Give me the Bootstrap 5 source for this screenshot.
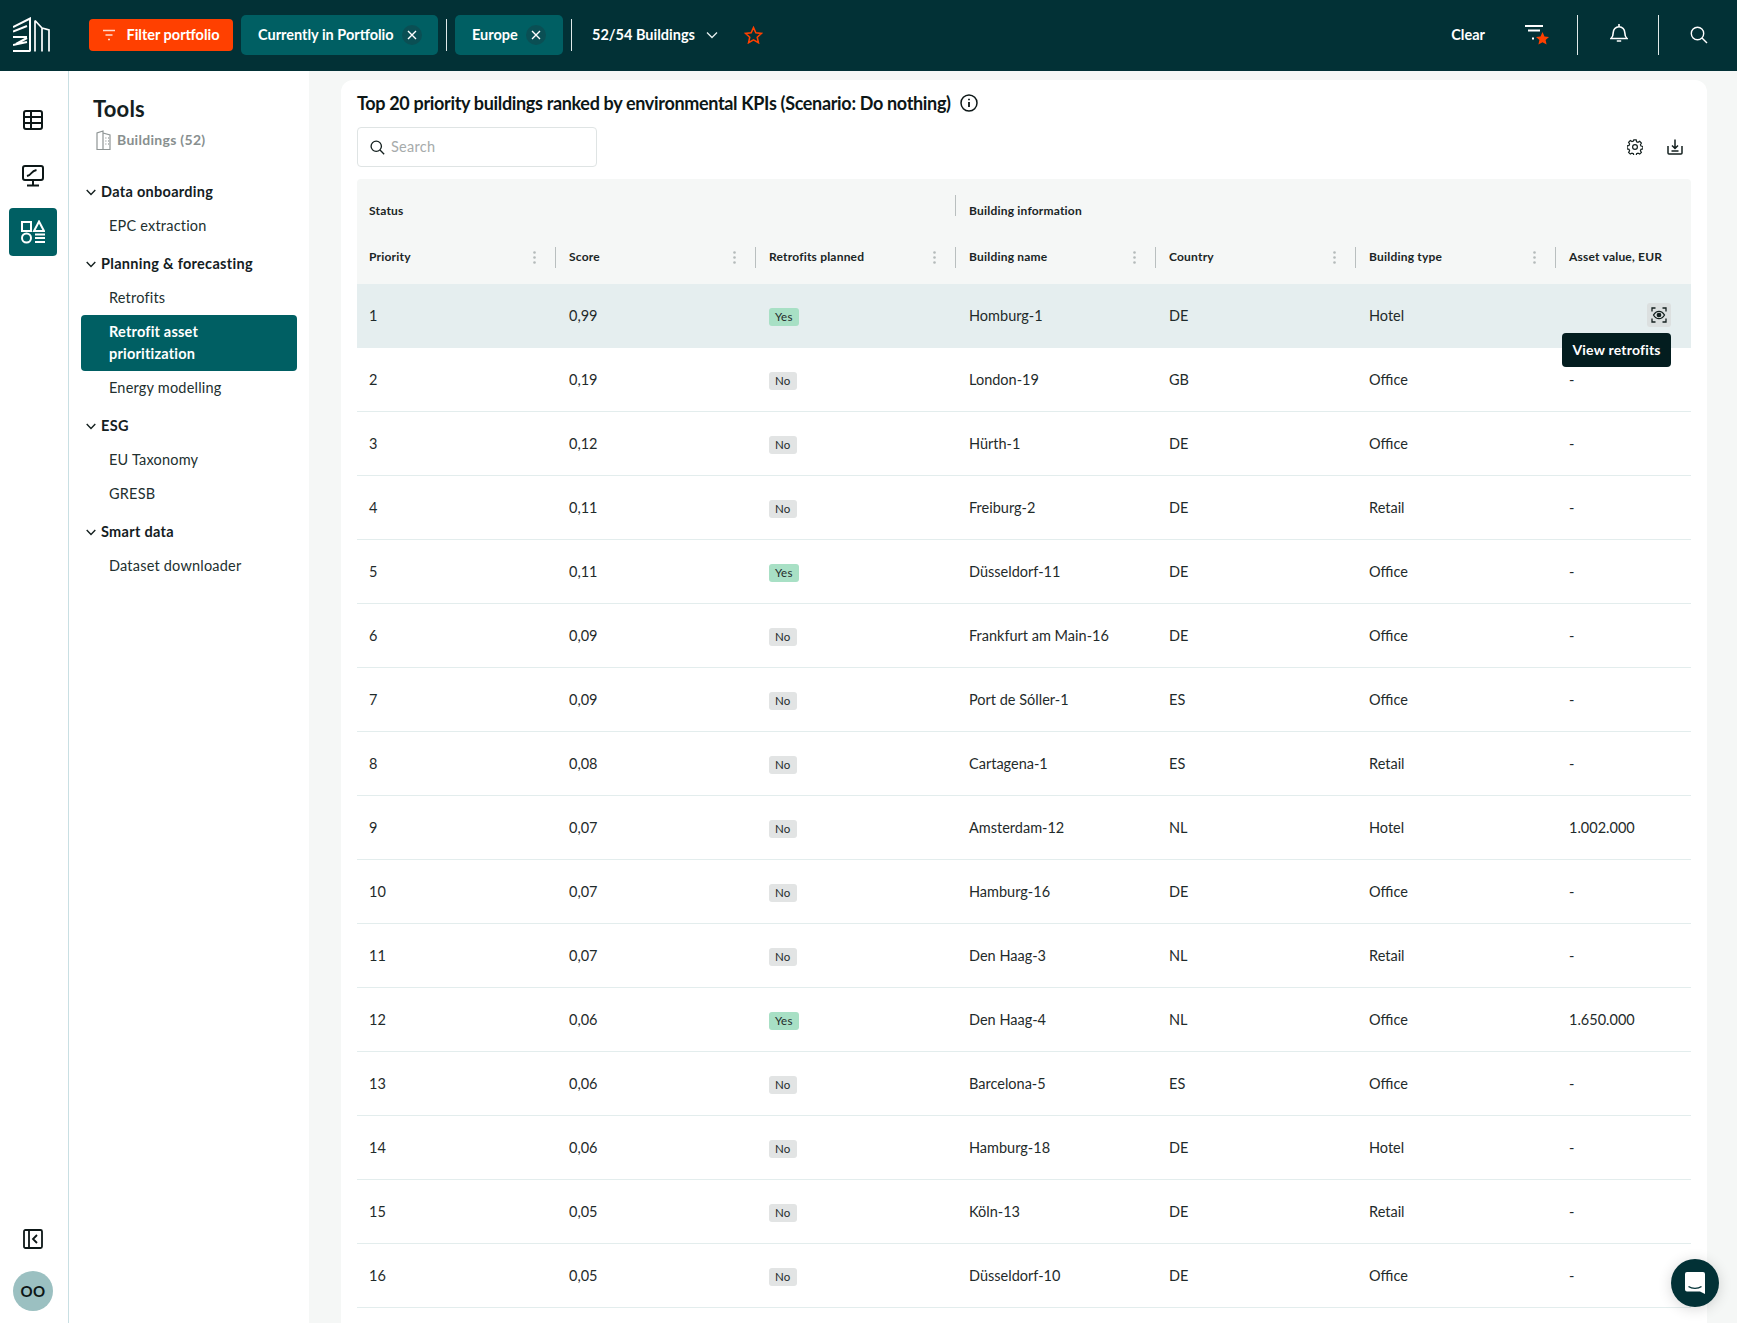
<!DOCTYPE html>
<html lang="en">
<head>
<meta charset="utf-8">
<title>Retrofit asset prioritization</title>
<link href="https://cdn.jsdelivr.net/npm/bootstrap@5.3.0/dist/css/bootstrap.min.css" rel="stylesheet">
<style>
html,body{height:100%;}
body{font-family:"Lato","Liberation Sans",sans-serif;background:#f5f7f6;color:#14201f;overflow:hidden;}
.topbar{height:71px;background:#023136;color:#fff;padding-left:13px;padding-right:29px;padding-bottom:1px;}
.logo-wrap{width:76px;}
.filter-btn{height:32px;width:144px;background:#ff4000;color:#fff;border:0;border-radius:4px;font-size:14.5px;font-weight:700;gap:10px;padding:0;white-space:nowrap;}
.chip{height:40px;background:#005f63;border-radius:5px;font-size:14.5px;font-weight:700;color:#fff;padding-left:17px;padding-right:17px;gap:8px;white-space:nowrap;}
.chip-first{width:197px;margin-left:8px;}
.chip-second{width:108px;}
.chip-x{width:20px;height:20px;border-radius:50%;background:#0a4f54;flex:none;}
.vline{width:1px;height:32px;background:#dfe9e9;}
.vline-tall{height:40px;}
.count-label{font-size:14.5px;font-weight:700;}
.count-chev{margin-left:11px;}
.count-star{margin-left:26px;}
.clear-label{font-size:14.5px;font-weight:700;}
.tfilter{margin-left:40px;margin-right:28px;}
.tbell{margin-left:32px;margin-right:30px;margin-bottom:4px;}
.tsearch{margin-left:31px;}
.shell{height:calc(100vh - 71px);}
.rail{width:69px;background:#fff;border-right:1px solid #c9dfe3;padding:25px 2px 12px 0;}
.rail-ico{width:48px;height:48px;border-radius:4px;color:#0d1717;}
.rail-ico-gap{margin-bottom:8px;}
.rail-active{background:#005f63;color:#fff;}
.avatar{width:40px;height:40px;border-radius:50%;background:#9bc0c1;color:#0d1717;font-size:15px;font-weight:700;letter-spacing:.5px;margin-top:22px;}
.tools{width:240px;background:#fff;padding:23px 12px 0 12px;}
.tools-title{font-size:22px;font-weight:700;line-height:30px;margin-left:12px;letter-spacing:.2px;}
.tools-sub{font-size:14px;font-weight:700;color:#888f8f;margin-left:15px;margin-top:6px;margin-bottom:25px;letter-spacing:.3px;gap:6px;line-height:20px;}
.sec-head{height:34px;font-size:14.5px;font-weight:700;letter-spacing:.3px;gap:5px;padding-left:5px;margin-top:4px;}
.nav-entry{height:34px;padding-left:28px;font-size:14.5px;letter-spacing:.2px;color:#22302f;text-decoration:none;display:flex;align-items:center;}
.nav-entry-on{height:56px;background:#005f63;color:#fff;font-weight:700;border-radius:4px;line-height:22px;}
.workspace{flex:1;min-width:0;padding:9px 30px 0 32px;overflow:hidden;}
.sheet{background:#fff;border-radius:12px;padding:13px 16px 60px 16px;}
.sheet-title{font-size:18px;font-weight:700;line-height:20px;letter-spacing:-.33px;margin:0;gap:9px;color:#0d1717;}
.tool-row{margin-top:14px;margin-bottom:12px;}
.find-box{width:240px;height:40px;border:1px solid #dfe4e4;border-radius:4px;padding-left:12px;gap:6px;color:#a6abab;font-size:14.5px;letter-spacing:.3px;}
.tool-gap{gap:24px;padding-right:8px;}
.prio-table{table-layout:fixed;width:1334px;margin:0;--bs-table-bg:transparent;border-collapse:separate;border-spacing:0;}
.prio-table th{background:#f5f7f6;font-size:12px;font-weight:700;letter-spacing:.2px;border:0;padding:0;color:#1a2525;}
.prio-table thead tr:first-child th{height:62px;padding-top:16px;vertical-align:top;}
.prio-table thead tr:first-child th:first-child{border-top-left-radius:4px;}
.prio-table thead tr:first-child th:last-child{border-top-right-radius:4px;}
.prio-table thead tr:last-child th{height:43px;padding-top:6px;vertical-align:top;}
.hcell{height:21px;padding-left:12px;padding-right:19px;}
.hcell-sep{border-left:1px solid #b9bfbf;padding-left:13px;}
.hcell-low{align-items:flex-end;line-height:10px;}
.hcell-lbl{padding-bottom:2px;}
.prio-table td{height:64px;padding:0 0 0 14px;vertical-align:middle;font-size:14.5px;color:#1f2b2b;border-bottom:1px solid #e3eded;}
.prio-table td:first-child{padding-left:12px;}
.row-on td{background:#e5eeef;border-bottom:0;}
.flag{display:inline-block;height:18px;line-height:18px;padding:0 6px;border-radius:3px;font-size:11.5px;letter-spacing:.2px;color:#1f2b2b;vertical-align:middle;}
.flag-no{background:#e2e4e4;}
.flag-yes{background:#a8e0c5;}
.eye-cell{position:relative;}
.eye-btn{width:24px;height:24px;background:#dce0e0;border-radius:3px;position:absolute;right:20px;top:19px;}
.tip{position:absolute;right:20px;top:49px;width:109px;height:34px;padding-bottom:2px;background:#031d1f;color:#fff;border-radius:4px;font-size:14px;font-weight:700;letter-spacing:.2px;z-index:3;}
.chat{position:fixed;right:18px;bottom:16px;width:48px;height:48px;border-radius:50%;background:#023136;box-shadow:0 2px 14px rgba(0,0,0,.16);}
</style>
</head>
<body>
<header class="topbar d-flex align-items-center">
  <div class="logo-wrap d-flex">
    <svg width="38" height="36" viewBox="0 0 38 36" fill="none" stroke="#fff" stroke-width="2"><path d="M0 10 L17 1.500 V34.500 M0 14.500 L14 9 M0 20 H14 M3 27 L14 21 M0 28 L14 25 M0 34 H17"/><path d="M22 3.500 V34.500 M22 3.500 L29 11 V34.500 M29 11 L36 13 V34.500" stroke-width="1.700"/></svg>
  </div>
  <button type="button" class="filter-btn btn d-flex align-items-center justify-content-center">
    <svg width="14" height="12" viewBox="0 0 14 12" fill="none" stroke="#ffd9cc" stroke-width="1.600"><path d="M1 1.500H13M3.500 6H10.500M6 10.500H8"/></svg>
    <span>Filter portfolio</span>
  </button>
  <div class="chip chip-first d-flex align-items-center justify-content-between">
    <span>Currently in Portfolio</span>
    <span class="chip-x d-flex align-items-center justify-content-center"><svg width="10" height="10" viewBox="0 0 10 10" stroke="#fff" stroke-width="1.400"><path d="M1 1L9 9M9 1L1 9"/></svg></span>
  </div>
  <div class="vline mx-2"></div>
  <div class="chip chip-second d-flex align-items-center justify-content-between">
    <span>Europe</span>
    <span class="chip-x d-flex align-items-center justify-content-center"><svg width="10" height="10" viewBox="0 0 10 10" stroke="#fff" stroke-width="1.400"><path d="M1 1L9 9M9 1L1 9"/></svg></span>
  </div>
  <div class="vline mx-2"></div>
  <div class="d-flex align-items-center ms-2 ps-1">
    <span class="count-label">52/54 Buildings</span>
    <svg class="count-chev" width="12" height="8" viewBox="0 0 12 8" fill="none" stroke="#e6eeee" stroke-width="1.300"><path d="M1 1.500L6 6.500L11 1.500"/></svg>
    <svg class="count-star" width="19" height="18" viewBox="0 0 24 23" fill="none" stroke="#ff4000" stroke-width="2"><path d="M12 2l3 6.600 7.200.8-5.400 4.900 1.500 7.100L12 17.800l-6.300 3.600 1.500-7.100L1.800 9.400 9 8.600z"/></svg>
  </div>
  <div class="ms-auto d-flex align-items-center">
    <span class="clear-label">Clear</span>
    <svg class="tfilter" width="24" height="20" viewBox="0 0 24 20" fill="none"><path d="M0 1H18M3 5.500H15M7 13.500H9" stroke="#fff" stroke-width="1.800"/><path d="M17.500 7l2 4.400 4.500.5-3.400 3.100 1 4.600-4.100-2.400-4.100 2.400 1-4.600-3.400-3.100 4.500-.5z" fill="#ff4000"/></svg>
    <div class="vline vline-tall"></div>
    <svg class="tbell" width="18" height="20" viewBox="0 0 18 20" fill="none" stroke="#fff" stroke-width="1.600"><path d="M1 15.500c1.600-1.400 2.200-3 2.200-5.800 0-3.300 2.400-6 5.800-6s5.800 2.700 5.800 6c0 2.800.6 4.400 2.200 5.800zM9 1v2.500M6.800 18h4.400"/></svg>
    <div class="vline vline-tall"></div>
    <svg class="tsearch" width="18" height="18" viewBox="0 0 18 18" fill="none" stroke="#fff" stroke-width="1.400"><circle cx="7.500" cy="7.500" r="6.200"/><path d="M12 12l5 5"/></svg>
  </div>
</header>
<div class="shell d-flex">
  <aside class="rail d-flex flex-column align-items-center">
    <div class="rail-ico d-flex align-items-center justify-content-center rail-ico-gap">
      <svg width="20" height="20" viewBox="0 0 20 20" fill="none" stroke="currentColor" stroke-width="2"><rect x="1" y="1" width="18" height="18" rx="2"/><path d="M1 7H19M1 13H19M8 1V19"/></svg>
    </div>
    <div class="rail-ico d-flex align-items-center justify-content-center rail-ico-gap">
      <svg width="22" height="22" viewBox="0 0 22 22" fill="none" stroke="currentColor" stroke-width="2"><path d="M3 1H19a2 2 0 0 1 2 2V13a2 2 0 0 1-2 2H3a2 2 0 0 1-2-2V3a2 2 0 0 1 2-2z"/><path d="M5 11c2-.5 3-1 4.500-3s2.500-2.500 5-3M11 15v5M5 20.500H17"/></svg>
    </div>
    <div class="rail-ico rail-active d-flex align-items-center justify-content-center">
      <svg width="24" height="24" viewBox="0 0 24 24" fill="none" stroke="currentColor" stroke-width="2"><rect x="1" y="2" width="9" height="9"/><path d="M18 1.500L23 11H13z"/><circle cx="5.500" cy="18" r="4.500"/><path d="M14 14.500H24M14 18H24M14 22H24"/></svg>
    </div>
    <div class="mt-auto d-flex flex-column align-items-center">
      <svg width="20" height="20" viewBox="0 0 20 20" fill="none" stroke="#0d1717" stroke-width="1.800"><rect x="1" y="1" width="18" height="18" rx="1.500"/><path d="M6 1V19M14 6L10 10L14 14"/></svg>
      <div class="avatar d-flex align-items-center justify-content-center">OO</div>
    </div>
  </aside>
  <nav class="tools">
    <div class="tools-title">Tools</div>
    <div class="tools-sub d-flex align-items-center">
      <svg width="15" height="20" viewBox="0 0 15 20" fill="none" stroke="#8f9595" stroke-width="1.200"><path d="M1 20V3l6 -2V20M7 3L14 5V20M1 19.500H14"/><path d="M9.500 8h.8M12 8h.8M9.500 11h.8M12 11h.8M9.500 14h.8M12 14h.8" stroke-width="1.400"/></svg>
      <span>Buildings (52)</span>
    </div>
    <div class="sec-head d-flex align-items-center"><svg width="10" height="7" viewBox="0 0 10 7" fill="none" stroke="#14201f" stroke-width="1.400"><path d="M.7 1L5 5.500L9.300 1"/></svg><span>Data onboarding</span></div>
    <a class="nav-entry" href="#">EPC extraction</a>
    <div class="sec-head d-flex align-items-center"><svg width="10" height="7" viewBox="0 0 10 7" fill="none" stroke="#14201f" stroke-width="1.400"><path d="M.7 1L5 5.500L9.300 1"/></svg><span>Planning &amp; forecasting</span></div>
    <a class="nav-entry" href="#">Retrofits</a>
    <a class="nav-entry nav-entry-on" href="#">Retrofit asset<br>prioritization</a>
    <a class="nav-entry" href="#">Energy modelling</a>
    <div class="sec-head d-flex align-items-center"><svg width="10" height="7" viewBox="0 0 10 7" fill="none" stroke="#14201f" stroke-width="1.400"><path d="M.7 1L5 5.500L9.300 1"/></svg><span>ESG</span></div>
    <a class="nav-entry" href="#">EU Taxonomy</a>
    <a class="nav-entry" href="#">GRESB</a>
    <div class="sec-head d-flex align-items-center"><svg width="10" height="7" viewBox="0 0 10 7" fill="none" stroke="#14201f" stroke-width="1.400"><path d="M.7 1L5 5.500L9.300 1"/></svg><span>Smart data</span></div>
    <a class="nav-entry" href="#">Dataset downloader</a>
  </nav>
  <main class="workspace">
    <section class="sheet">
      <h1 class="sheet-title d-flex align-items-center">
        <span>Top 20 priority buildings ranked by environmental KPIs (Scenario: Do nothing)</span>
        <svg width="18" height="18" viewBox="0 0 18 18" fill="none" stroke="#0d1717" stroke-width="1.500"><circle cx="9" cy="9" r="8"/><path d="M9 8V13M9 4.800V6.200" stroke-width="1.800"/></svg>
      </h1>
      <div class="tool-row d-flex align-items-center justify-content-between">
        <div class="find-box d-flex align-items-center">
          <svg width="15" height="15" viewBox="0 0 18 18" fill="none" stroke="#14201f" stroke-width="1.600"><circle cx="7.500" cy="7.500" r="6.200"/><path d="M12 12l5 5"/></svg>
          <span>Search</span>
        </div>
        <div class="tool-gap d-flex align-items-center">
          <svg width="16" height="16" viewBox="0 0 16 16" fill="none" stroke="#14201f" stroke-width="1.200"><circle cx="8" cy="8" r="2.400"/><path d="M6.800 .8h2.400l.4 1.900 1.400.6 1.700-1 1.700 1.700-1 1.700.6 1.400 1.900.4v2.400l-1.900.4-.6 1.400 1 1.700-1.700 1.700-1.700-1-1.400.6-.4 1.900H6.800l-.4-1.900-1.400-.6-1.700 1-1.700-1.700 1-1.700-.6-1.400-1.900-.4V6.800l1.900-.4.6-1.400-1-1.700 1.700-1.700 1.700 1 1.400-.6z"/></svg>
          <svg width="16" height="16" viewBox="0 0 16 16" fill="none" stroke="#14201f" stroke-width="1.500"><path d="M1 7V14a1 1 0 0 0 1 1H14a1 1 0 0 0 1-1V7M5 6.500L8 9.500L11 6.500M8 .5V9.500M4.500 12H11.500"/></svg>
        </div>
      </div>
      <table class="table prio-table">
        <colgroup><col style="width:198px"><col style="width:200px"><col style="width:200px"><col style="width:200px"><col style="width:200px"><col style="width:200px"><col style="width:136px"></colgroup>
        <thead>
          <tr>
            <th colspan="3"><div class="hcell hcell-low d-flex">Status</div></th>
            <th colspan="4"><div class="hcell hcell-low hcell-sep d-flex">Building information</div></th>
          </tr>
          <tr>
            <th><div class="hcell d-flex align-items-center justify-content-between"><span class="hcell-lbl">Priority</span><svg width="3" height="13" viewBox="0 0 3 13" fill="#b4baba"><circle cx="1.500" cy="1.500" r="1.300"/><circle cx="1.500" cy="6.500" r="1.300"/><circle cx="1.500" cy="11.500" r="1.300"/></svg></div></th>
            <th><div class="hcell hcell-sep d-flex align-items-center justify-content-between"><span class="hcell-lbl">Score</span><svg width="3" height="13" viewBox="0 0 3 13" fill="#b4baba"><circle cx="1.500" cy="1.500" r="1.300"/><circle cx="1.500" cy="6.500" r="1.300"/><circle cx="1.500" cy="11.500" r="1.300"/></svg></div></th>
            <th><div class="hcell hcell-sep d-flex align-items-center justify-content-between"><span class="hcell-lbl">Retrofits planned</span><svg width="3" height="13" viewBox="0 0 3 13" fill="#b4baba"><circle cx="1.500" cy="1.500" r="1.300"/><circle cx="1.500" cy="6.500" r="1.300"/><circle cx="1.500" cy="11.500" r="1.300"/></svg></div></th>
            <th><div class="hcell hcell-sep d-flex align-items-center justify-content-between"><span class="hcell-lbl">Building name</span><svg width="3" height="13" viewBox="0 0 3 13" fill="#b4baba"><circle cx="1.500" cy="1.500" r="1.300"/><circle cx="1.500" cy="6.500" r="1.300"/><circle cx="1.500" cy="11.500" r="1.300"/></svg></div></th>
            <th><div class="hcell hcell-sep d-flex align-items-center justify-content-between"><span class="hcell-lbl">Country</span><svg width="3" height="13" viewBox="0 0 3 13" fill="#b4baba"><circle cx="1.500" cy="1.500" r="1.300"/><circle cx="1.500" cy="6.500" r="1.300"/><circle cx="1.500" cy="11.500" r="1.300"/></svg></div></th>
            <th><div class="hcell hcell-sep d-flex align-items-center justify-content-between"><span class="hcell-lbl">Building type</span><svg width="3" height="13" viewBox="0 0 3 13" fill="#b4baba"><circle cx="1.500" cy="1.500" r="1.300"/><circle cx="1.500" cy="6.500" r="1.300"/><circle cx="1.500" cy="11.500" r="1.300"/></svg></div></th>
            <th><div class="hcell hcell-sep d-flex align-items-center"><span class="hcell-lbl">Asset value, EUR</span></div></th>
          </tr>
        </thead>
        <tbody>
          <tr class="row-on"><td>1</td><td>0,99</td><td><span class="flag flag-yes">Yes</span></td><td>Homburg-1</td><td>DE</td><td>Hotel</td><td class="eye-cell"><span class="eye-btn d-flex align-items-center justify-content-center"><svg width="16" height="16" viewBox="0 0 16 16" fill="none" stroke="#14201f" stroke-width="1.300"><path d="M1 4.500V1H4.500M11.500 1H15V4.500M1 11.500V15H4.500M11.500 15H15V11.500"/><path d="M2.500 8C4 5.400 6 4.300 8 4.300S12 5.400 13.500 8C12 10.600 10 11.700 8 11.700S4 10.600 2.500 8z"/><circle cx="8" cy="8" r="1.700" fill="#14201f"/></svg></span><span class="tip d-flex align-items-center justify-content-center">View retrofits</span></td></tr>
          <tr><td>2</td><td>0,19</td><td><span class="flag flag-no">No</span></td><td>London-19</td><td>GB</td><td>Office</td><td>-</td></tr>
          <tr><td>3</td><td>0,12</td><td><span class="flag flag-no">No</span></td><td>Hürth-1</td><td>DE</td><td>Office</td><td>-</td></tr>
          <tr><td>4</td><td>0,11</td><td><span class="flag flag-no">No</span></td><td>Freiburg-2</td><td>DE</td><td>Retail</td><td>-</td></tr>
          <tr><td>5</td><td>0,11</td><td><span class="flag flag-yes">Yes</span></td><td>Düsseldorf-11</td><td>DE</td><td>Office</td><td>-</td></tr>
          <tr><td>6</td><td>0,09</td><td><span class="flag flag-no">No</span></td><td>Frankfurt am Main-16</td><td>DE</td><td>Office</td><td>-</td></tr>
          <tr><td>7</td><td>0,09</td><td><span class="flag flag-no">No</span></td><td>Port de Sóller-1</td><td>ES</td><td>Office</td><td>-</td></tr>
          <tr><td>8</td><td>0,08</td><td><span class="flag flag-no">No</span></td><td>Cartagena-1</td><td>ES</td><td>Retail</td><td>-</td></tr>
          <tr><td>9</td><td>0,07</td><td><span class="flag flag-no">No</span></td><td>Amsterdam-12</td><td>NL</td><td>Hotel</td><td>1.002.000</td></tr>
          <tr><td>10</td><td>0,07</td><td><span class="flag flag-no">No</span></td><td>Hamburg-16</td><td>DE</td><td>Office</td><td>-</td></tr>
          <tr><td>11</td><td>0,07</td><td><span class="flag flag-no">No</span></td><td>Den Haag-3</td><td>NL</td><td>Retail</td><td>-</td></tr>
          <tr><td>12</td><td>0,06</td><td><span class="flag flag-yes">Yes</span></td><td>Den Haag-4</td><td>NL</td><td>Office</td><td>1.650.000</td></tr>
          <tr><td>13</td><td>0,06</td><td><span class="flag flag-no">No</span></td><td>Barcelona-5</td><td>ES</td><td>Office</td><td>-</td></tr>
          <tr><td>14</td><td>0,06</td><td><span class="flag flag-no">No</span></td><td>Hamburg-18</td><td>DE</td><td>Hotel</td><td>-</td></tr>
          <tr><td>15</td><td>0,05</td><td><span class="flag flag-no">No</span></td><td>Köln-13</td><td>DE</td><td>Retail</td><td>-</td></tr>
          <tr><td>16</td><td>0,05</td><td><span class="flag flag-no">No</span></td><td>Düsseldorf-10</td><td>DE</td><td>Office</td><td>-</td></tr>
        </tbody>
      </table>
    </section>
  </main>
</div>
<div class="chat d-flex align-items-center justify-content-center">
  <svg width="22" height="24" viewBox="0 0 22 24"><path d="M3 1H19a2 2 0 0 1 2 2V23l-5-2.500H3a2 2 0 0 1-2-2V3a2 2 0 0 1 2-2z" fill="#fff"/><path d="M4.500 15.500C8 18 14 18 17.500 15.500" fill="none" stroke="#023136" stroke-width="1.300"/></svg>
</div>
<script src="https://cdn.jsdelivr.net/npm/bootstrap@5.3.0/dist/js/bootstrap.bundle.min.js"></script>
</body>
</html>
